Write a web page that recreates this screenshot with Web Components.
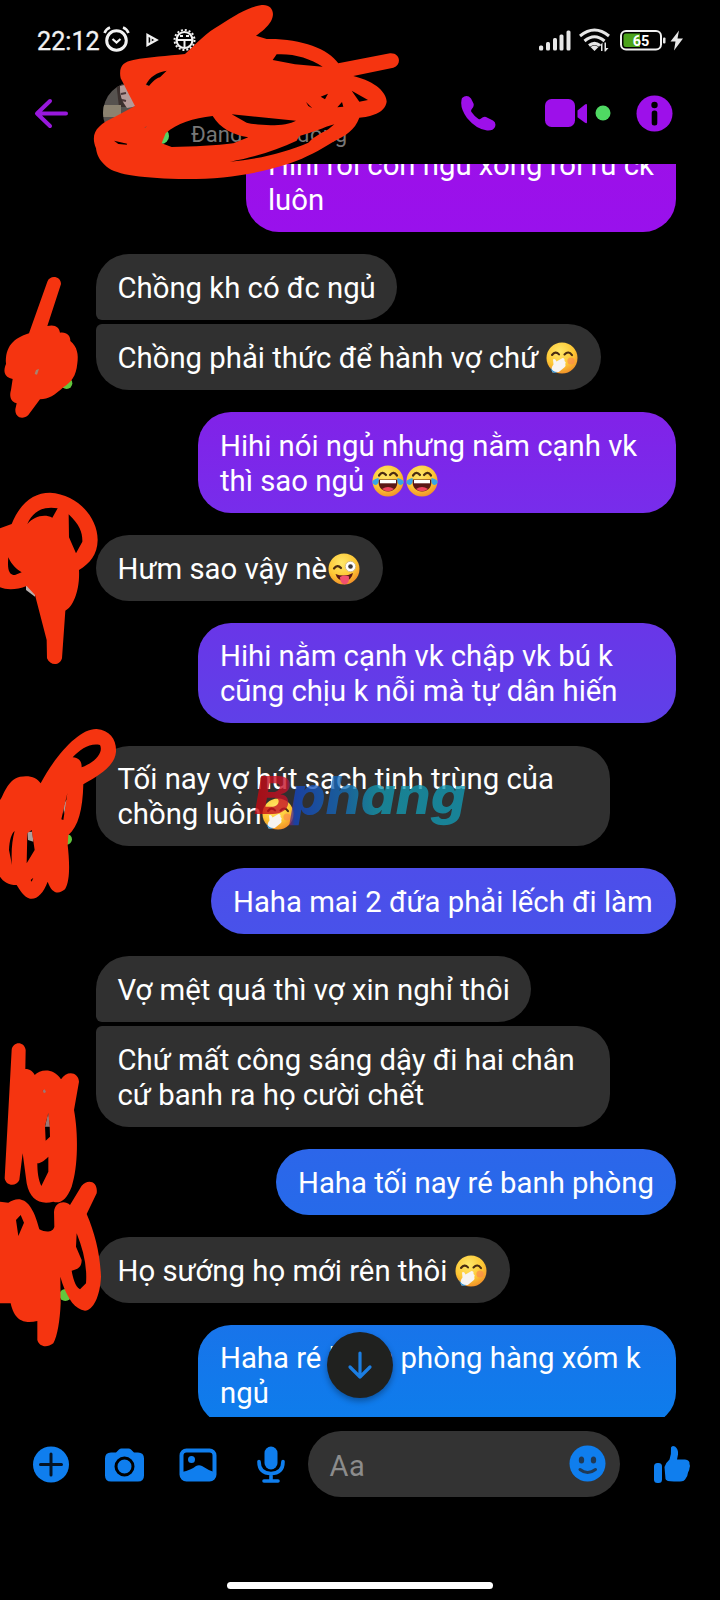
<!DOCTYPE html>
<html lang="vi">
<head>
<meta charset="utf-8">
<title>Chat</title>
<style>
html,body{margin:0;background:#000}
body{width:720px;height:1600px;overflow:hidden;font-family:Roboto,"Noto Sans",sans-serif}
</style>
</head>
<body>
<chat-app></chat-app>
<script>
const define=(name,html)=>customElements.define(name,class extends HTMLElement{
  constructor(){super();const t=document.createElement('template');t.innerHTML=html;
    this.attachShadow({mode:'open'}).append(t.content.cloneNode(true));}
});

const emojiArt={
  giggle:`<circle cx="16" cy="16" r="15.500" fill="url(#g)"/><path d="M6 13q3.500-4.500 7-.6M18.500 12.400q4-4 7.500.7" fill="none" stroke="#4a2c12" stroke-width="2.100" stroke-linecap="round"/><circle cx="25" cy="19" r="3.600" fill="#f98a4c" opacity=".7"/><path d="M6.500 30.500q-2-5 1-8l-.5-5q2-1.500 3.500 2l6-3.500q2.500 0 2 3 2 1 .8 3 1 2-1 3.500l-5.500 4.500Z" fill="#f7f4f2"/><path d="M4.500 25q0 4.500 4 6l3-1Q6 30 4.500 25" fill="#2d8fd0"/>`,
  joy:`<circle cx="16" cy="16" r="15.500" fill="url(#g)"/><path d="M7 10.500q3.500-5 7-.5M18 10q3.500-4.500 7 .5" fill="none" stroke="#4a2c12" stroke-width="2.200" stroke-linecap="round"/><path d="M6.500 14.500h19q.5 11.500-9.500 12-10-.5-9.500-12" fill="#5b1816"/><path d="M8 15h16v3.300H8Z" fill="#fff"/><path d="M10 24q6-4 12 0-6 4.500-12 0" fill="#ee4560"/><path d="M6.500 13q1 7-3.500 7-4-1.500-2-4.500 2-2 5.500-2.500M25.500 13q-1 7 3.500 7 4-1.500 2-4.500-2-2-5.500-2.500" fill="#36a5e8"/>`,
  wink:`<circle cx="16" cy="16" r="15.500" fill="url(#g)"/><path d="M6 15.500q3.500-4.500 7-.5" fill="none" stroke="#4a2c12" stroke-width="2.200" stroke-linecap="round"/><circle cx="22.500" cy="13.500" r="5.200" fill="#fff" stroke="#cbb482" stroke-width=".8"/><circle cx="22.500" cy="13.500" r="2.300" fill="#3f3a39"/><path d="M7.500 21q9 3.500 17.500-1-1.500 7.500-8.500 8-7 0-9-7" fill="#5b1816"/><path d="M12 24q4.500-2.500 9-.5.5 8-4.300 7.800Q12 31 12 24" fill="#f2506e"/>`
};
customElements.define('emoji-icon',class extends HTMLElement{
  connectedCallback(){this.attachShadow({mode:'open'}).innerHTML=`<style>:host{display:inline-block;width:34.300px;height:32px;vertical-align:-6.500px}svg{display:block;margin-left:.6px;width:32px;height:32px}</style>
  <svg viewBox="0 0 32 32"><defs><radialGradient id="g" cx=".42" cy=".3" r=".75"><stop offset="0" stop-color="#ffe86a"/><stop offset=".6" stop-color="#fdc734"/><stop offset="1" stop-color="#f08a27"/></radialGradient></defs>${emojiArt[this.getAttribute('kind')]}</svg>`;}
});

define('status-bar',`<style>
:host{display:flex;align-items:center;height:80px;box-sizing:border-box;padding:0 36px 0 37px;color:#f2f2f2}
.t{font-size:25.200px;font-weight:400;-webkit-text-stroke:.3px #f2f2f2;width:66px;padding-top:2px}
.sp{flex:1}svg{display:block;flex:none}
</style>
<div class="t">22:12</div>
<svg width="95" height="30" viewBox="0 0 95 30" fill="none" stroke="#f2f2f2">
<circle cx="13.500" cy="15.500" r="9.800" stroke-width="3"/><path d="m9.500 14 4 3.500 4-3.500" stroke-width="2.200"/><path d="M1.500 8q1.500-4 5.500-5.500M20 2.500q4 1.500 5.500 5.500" stroke-width="2.600"/>
<path d="m44.500 10 9 5-9 5Z" stroke-width="2.300"/><path d="M48 12v6" stroke-width="1.500"/>
<circle cx="81.500" cy="15" r="10" stroke-width="2" stroke-dasharray="2 1.927"/><circle cx="81.500" cy="15" r="8" stroke-width="2.200"/><path d="M74 15h15M81.500 15v8M77 11h3M83 11h3" stroke-width="2"/></svg>
<div class="sp"></div>
<svg width="145" height="30" viewBox="0 0 145 30" fill="#e6e6e6">
<rect y="20.500" width="4.200" height="5" rx="1.500"/><rect x="7" y="17" width="4" height="8.500" rx="1.500"/><rect x="14" y="13" width="4" height="12.500" rx="1.500"/><rect x="20.500" y="9.500" width="4" height="16" rx="1.500"/><rect x="27.500" y="5.500" width="4" height="20" rx="1.500"/>
<g fill="none" stroke="#e6e6e6" stroke-width="3"><path d="M41 11q14.500-12 29 0M45.500 16q10-8.500 20 0M50 20.500q5.500-4.300 11 0"/></g><path d="m51.500 22 4 4 4-4q-4-3-8 0"/><path d="m61 20.500 2.500-3V26h-1.500v-5zM65.500 17.500h1.500V23h2.500l-3 3.500h-1Z"/>
<rect x="82" y="6" width="40" height="18.500" rx="5" fill="none" stroke="#f0f0f0" stroke-width="2"/><path d="M87 8.500h14v13.500H87q-2.500 0-2.500-2.500V11q0-2.500 2.500-2.500" fill="#4ba31b"/><rect x="124" y="12.500" width="2.500" height="6" rx="1"/><text x="102" y="20.500" text-anchor="middle" font-size="14.500" font-weight="700" fill="#fff" font-family="Roboto">65</text><path d="m140 5.500-8.500 11h5l-1.500 9 9-12h-5.500Z"/></svg>`);

define('chat-header',`<style>
:host{display:flex;align-items:center;height:84px;box-sizing:border-box;padding:0 47.500px 18px 34px;--p:#9d10ea}
svg{display:block;flex:none}.avatar{margin-left:33px}
.who{margin-left:22px;padding-top:43px;width:160px;font-size:22px;color:#777;line-height:26px;white-space:nowrap}.sp{flex:1}
.call{margin-right:48px}.video{margin-right:23.500px}
</style>
<svg width="36" height="34" viewBox="0 0 36 34" fill="none" stroke="#9818dc" stroke-width="4" stroke-linecap="round" stroke-linejoin="round"><path d="M16 5 3 17.500 16 30M3.500 17.500H32"/></svg>
<svg class="avatar" width="66" height="64" viewBox="0 0 66 64"><defs><clipPath id="c"><circle cx="31" cy="32" r="31"/></clipPath></defs><g clip-path="url(#c)"><rect width="66" height="64" fill="#56524f"/><path d="M13 0h25v26H16Z" fill="#3b302e"/><path d="M17 5q8-3 18 3v17l-11 2q-8-10-7-22" fill="#b59a98"/><path d="m18 13 5-1M19 19l4 1" stroke="#4a3638" stroke-width="2"/><path d="M0 24h18v12H0Z" fill="#8b8270"/><path d="M0 46h40v18H0Z" fill="#a8a0a4"/></g><circle cx="58" cy="55" r="8" fill="#56d364"/></svg>
<div class="who">Đang hoạt động</div>
<div class="sp"></div>
<svg class="call" width="36" height="36" viewBox="0 0 36 36" fill="var(--p)"><path d="M2 3Q7-1 11 3.500l2.500 5q1 3-2 6-.8 1 0 2.500 3 4.500 7 7 1.500.8 2.500-.4 2.500-2.400 5-1.600l7 3.500q3.500 2 2 6.500-2 4-8 3.500Q16 34 7 23-1 12 2 3"/></svg>
<svg class="video" width="68" height="36" viewBox="0 0 68 36" fill="var(--p)"><rect x="1" y="4" width="30" height="28" rx="6.500"/><path d="M33.500 15.500 41 9.500q2-1.200 2 1V27q0 2-2 .8l-7.500-5.500Z"/><circle cx="59" cy="18" r="7.500" fill="#4fd963"/></svg>
<svg width="37" height="37" viewBox="0 0 37 37"><circle cx="18.500" cy="18.500" r="18" fill="var(--p)"/><circle cx="18.500" cy="10" r="3.200"/><rect x="15.700" y="15.500" width="5.600" height="15" rx="2.500"/></svg>`);

customElements.define('chat-bubble',class extends HTMLElement{
  connectedCallback(){const a=n=>this.getAttribute(n);
    this.attachShadow({mode:'open'}).innerHTML=`<style>
    :host{display:block;flex:none;box-sizing:border-box;width:${a('w')}px;height:${a('lines')==='2'?100.5:65.5}px;padding:16.500px 0 0 22px;
      border-radius:33px;color:#fff;background:#303030;font-size:29.300px;line-height:34.800px;white-space:nowrap;margin-top:22.300px}
    :host([mine]){align-self:flex-end;background:linear-gradient(${a('from')||'#000'},${a('to')||'#000'})}
    :host([next]){margin-top:4.700px;border-top-left-radius:6px}
    :host([joined]){border-bottom-left-radius:6px}
    :host([first]){margin-top:-32.500px}
    </style><slot></slot>`;}
});

define('message-list',`<style>:host{display:flex;flex-direction:column;align-items:flex-start;height:1252.500px;padding:0 44px 0 95.500px;box-sizing:border-box;overflow:hidden}</style><slot></slot>`);

define('composer-bar',`<style>
:host{display:flex;align-items:center;height:94px;padding:0 0 0 32px;box-sizing:border-box}
svg{display:block;flex:none}
.tool{margin-right:34px}.tool.p{margin-right:36px}.tool.m{margin-right:19.500px}
.field{display:flex;flex:none;align-items:center;justify-content:space-between;width:312.500px;height:66px;box-sizing:border-box;border-radius:33px;background:#333;padding:0 14px 0 22px;color:#8c8c8c;font-size:29px;letter-spacing:.5px}
.field span{padding-top:4px}
.like{margin-left:32px}
</style>
<svg class="tool" width="38" height="40" viewBox="0 0 38 40"><circle cx="19" cy="20.500" r="18" fill="#0f7eee"/><path d="M19 10v21M8.500 20.500h21" stroke="#051426" stroke-width="3" stroke-linecap="round"/></svg>
<svg class="tool" width="40" height="40" viewBox="0 0 40 40"><path d="M7 8.500h5l3-3q1-1 2.500-1h7q1.500 0 2.500 1l3 3h4q6 0 6 6v17q0 6-6 6H7q-6 0-6-6v-17q0-6 6-6" fill="#0f7eee"/><circle cx="20.500" cy="22.500" r="8.500" fill="#0f7eee" stroke="#000" stroke-width="3"/></svg>
<svg class="tool p" width="40" height="40" viewBox="0 0 40 40"><rect x="3.500" y="6.500" width="33" height="29" rx="5" fill="none" stroke="#0f7eee" stroke-width="4"/><circle cx="13.500" cy="15.500" r="3.500" fill="#0f7eee"/><path d="M4 28q9-2 14-6 3-1.500 6 0 6 4 12 6v3q0 5-5 5H9q-5 0-5-5Z" fill="#0f7eee"/></svg>
<svg class="tool m" width="34" height="40" viewBox="0 0 34 40"><rect x="10.500" y="2.500" width="13" height="23" rx="6.500" fill="#0f7eee"/><path d="M5 17.500q0 12 12 12t12-12M17 29.500v6M10 37h14" fill="none" stroke="#0f7eee" stroke-width="3.600" stroke-linecap="round"/></svg>
<div class="field"><span>Aa</span><svg width="37" height="37" viewBox="0 0 37 37"><circle cx="18.500" cy="18.500" r="18" fill="#0f7eee"/><ellipse cx="12.500" cy="15" rx="2.700" ry="3.600" fill="#203a57"/><ellipse cx="24.500" cy="15" rx="2.700" ry="3.600" fill="#203a57"/><path d="M11 24.500q7.500 6 15.500 0" fill="none" stroke="#203a57" stroke-width="3" stroke-linecap="round"/></svg></div>
<svg class="like" width="40" height="40" viewBox="0 0 40 40" fill="#0f7eee"><rect x="2" y="19" width="8" height="20" rx="3.500"/><path d="M19 3.500q1-2.500 4-1 3.500 2.500 3 8l-1 5h8q5 .5 4.500 4.500 1 2 0 4 0 2.500-1.500 4.500-.5 4-2 5.500-1.500 3.500-6 3.500h-6q-8 0-8.500-2.500l-1-12q1-4 5-7.500 2-5 1.500-12"/></svg>`);

define('jump-button',`<style>:host{position:absolute;left:326.500px;top:1331.500px;width:66px;height:66px;border-radius:50%;background:#20211f;display:grid;place-items:center;box-shadow:0 3px 6px #0005}</style>
<svg width="28" height="32" viewBox="0 0 28 32" fill="none" stroke="#1c7ee2" stroke-width="3.200" stroke-linecap="round" stroke-linejoin="round"><path d="M14 4v24M4 18l10 10 10-10"/></svg>`);

define('site-watermark',`<style>:host{position:absolute;left:250px;top:760px;width:230px;height:75px;opacity:.78}svg{display:block}</style>
<svg width="230" height="75" viewBox="0 0 230 75"><defs><linearGradient id="w" gradientUnits="userSpaceOnUse" x1="5" x2="215" y1="0" y2="0"><stop offset="0" stop-color="#c5060d"/><stop offset=".15" stop-color="#c5122a"/><stop offset=".19" stop-color="#1446c0"/><stop offset=".4" stop-color="#1468b8"/><stop offset=".58" stop-color="#1398b0"/><stop offset="1" stop-color="#129ab4"/></linearGradient></defs>
<text x="4" y="54" font-family="Inter,Roboto,sans-serif" font-weight="800" font-style="italic" font-size="52" fill="url(#w)" textLength="212" lengthAdjust="spacingAndGlyphs">Bphang</text></svg>`);

define('ink-layer',`<style>:host{position:absolute;left:0;top:0;width:720px;height:1600px;pointer-events:none}svg{display:block}</style>
<svg width="720" height="1600" viewBox="0 0 2160 4800" fill="#f53410" fill-rule="evenodd">
<path d="M555 162C590 130 620 97 660 75C705 45 750 20 785 15C815 12 828 38 812 65C803 80 785 95 768 107L800 117C900 115 985 145 1015 190L1170 160C1200 158 1207 193 1180 203L1060 228C1130 245 1160 280 1160 305C1155 340 1110 350 1078 353C1065 390 1035 408 1000 425C960 450 920 472 870 490C780 520 680 537 560 537C430 535 350 525 320 500C295 480 290 460 288 445C270 400 290 375 345 350L405 318C390 290 370 250 362 235C355 200 370 185 400 180C450 170 500 168 555 162Z
M437 255C450 230 470 217 500 212L480 232C465 235 455 250 447 258ZM818 180L830 163C880 160 930 175 968 200L885 193ZM497 400C530 370 580 355 638 348C660 385 700 405 745 412L700 430C650 437 580 440 515 441L485 430ZM695 343L888 362C860 380 780 378 740 368ZM1055 272L1104 300L1078 305ZM962 290L984 281L975 298ZM1012 322L1026 306L1030 320ZM918 306L937 325L925 318ZM342 422L382 431L380 434L355 432ZM690 485C770 470 830 450 890 422L898 408C940 398 970 382 1003 373L985 388C960 402 945 408 925 428C860 455 780 478 690 485ZM432 385L440 378L438 382Z"/>
<g transform="translate(0 720)"><circle cx="200" cy="430" r="17" fill="#62c63d"/><path d="M142 125C150 103 183 108 183 132L142 258C165 252 178 262 180 278C200 275 212 288 211 303C232 320 236 345 232 370C228 410 215 425 190 442C165 465 145 478 120 478L85 525C70 540 45 535 46 508L50 490C30 485 28 465 33 450L38 417C10 412 10 390 18 372C15 320 40 295 87 280Z"/><path d="m104 402 4-12 9-3-6 17Z" fill="#a8826e"/></g>
<g transform="translate(0 1440)"><path d="M78 315v15l27 20v-35Z" fill="#bbb0ae"/><path d="M35 132C60 70 100 38 150 38C230 42 293 110 293 180C292 225 270 250 237 270C240 330 220 380 196 392L186 535C180 558 150 558 141 535L140 480L105 345L80 318C50 330 20 330 0 322V145ZM82 132C100 90 135 78 173 85L157 113C130 100 100 112 82 132ZM206 103C240 135 248 160 247 185L228 220L207 172ZM25 232C35 255 50 268 65 277L45 285C25 285 22 265 25 232Z"/></g>
<g transform="translate(0 2160)"><circle cx="200" cy="358" r="16" fill="#62c63d"/><path d="M82 335h15l3 30-16-5ZM190 260l8-20 4 3-10 40Z" fill="#aaa09e"/><path d="M122 190C170 100 240 25 290 27C330 30 350 60 348 95C345 140 290 170 250 193C248 270 235 320 205 345L203 375C208 420 212 480 195 508C175 525 155 520 143 485C130 520 110 540 90 536C70 530 60 510 50 495C25 495 10 485 0 470V240C10 230 20 180 60 170C90 165 110 172 122 190ZM218 112C240 88 270 68 300 75C310 95 290 125 245 142C245 125 240 115 218 112ZM27 390C28 360 35 340 44 333C36 360 33 400 36 435ZM82 340L95 330L104 390L80 430ZM202 220L190 300L184 298ZM92 480L100 473L95 485Z"/></g>
<g transform="translate(0 3060)"><circle cx="196" cy="825" r="18" fill="#62c63d"/><path d="M128 205h12v18h-12ZM135 320L145 275L150 320Z" fill="#9a7775"/><path d="M35 90C38 65 72 62 77 90L76 147C90 147 100 155 104 165C120 148 160 142 183 178C200 150 235 155 237 185L222 270C235 340 235 440 215 500C200 540 180 552 160 545C120 555 90 540 80 490L68 400L58 480C50 500 18 500 14 475ZM135 318L145 278L149 318L150 350L137 362ZM112 430C125 430 140 415 145 410V455L124 498C115 480 112 455 112 430ZM128 212L134 208L138 216L132 220Z"/>
<path d="M0 545L25 548C60 525 95 535 118 628C140 640 160 635 163 620L162 575C165 545 195 540 210 555L245 497C265 475 295 485 290 520L260 582C285 640 300 700 303 770C300 830 280 870 255 872C225 868 205 840 187 790L181 770L182 850C180 900 172 950 160 970C140 985 118 980 112 960V903C80 910 45 910 32 850H0ZM48 600L62 585L72 608L55 648ZM230 640C250 690 262 740 258 790L240 808C225 800 218 770 215 752C235 748 245 740 245 720L228 680Z"/></g>
</svg>`);

define('chat-app',`<style>:host{display:flex;flex-direction:column;position:relative;width:720px;height:1600px;background:#000;overflow:hidden}
.home{width:266px;height:7px;border-radius:4px;background:#fff;margin:71.500px auto 0 226.500px}</style>
<status-bar></status-bar><chat-header></chat-header>
<message-list>
<chat-bubble first mine lines="2" w="430" from="#9d10e8" to="#9911ec">Hihi rồi còn ngủ xong rồi ru ck<br>luôn</chat-bubble>
<chat-bubble joined w="301.500">Chồng kh có đc ngủ</chat-bubble>
<chat-bubble next w="505">Chồng phải thức để hành vợ chứ <emoji-icon kind="giggle"></emoji-icon></chat-bubble>
<chat-bubble mine lines="2" w="478" from="#8122e8" to="#772deb">Hihi nói ngủ nhưng nằm cạnh vk<br>thì sao ngủ <emoji-icon kind="joy"></emoji-icon><emoji-icon kind="joy"></emoji-icon></chat-bubble>
<chat-bubble w="287.500">Hưm sao vậy nè<emoji-icon kind="wink"></emoji-icon></chat-bubble>
<chat-bubble mine lines="2" w="478" from="#6936e8" to="#5f40e8">Hihi nằm cạnh vk chập vk bú k<br>cũng chịu k nỗi mà tự dân hiến</chat-bubble>
<chat-bubble lines="2" w="514.500">Tối nay vợ hút sạch tinh trùng của<br>chồng luôn<emoji-icon kind="giggle"></emoji-icon></chat-bubble>
<chat-bubble mine w="465" from="#4d4eea" to="#4852ea">Haha mai 2 đứa phải lếch đi làm</chat-bubble>
<chat-bubble joined w="435.500">Vợ mệt quá thì vợ xin nghỉ thôi</chat-bubble>
<chat-bubble next lines="2" w="514.500">Chứ mất công sáng dậy đi hai chân<br>cứ banh ra họ cười chết</chat-bubble>
<chat-bubble mine w="400" from="#2c66ea" to="#266aea">Haha tối nay ré banh phòng</chat-bubble>
<chat-bubble w="414.500">Họ sướng họ mới rên thôi <emoji-icon kind="giggle"></emoji-icon></chat-bubble>
<chat-bubble mine lines="2" w="478" from="#1874ea" to="#0d7dec">Haha ré banh phòng hàng xóm k<br>ngủ</chat-bubble>
</message-list>
<composer-bar></composer-bar>
<div class="home"></div>
<jump-button></jump-button><site-watermark></site-watermark><ink-layer></ink-layer>`);
</script>
</body>
</html>
